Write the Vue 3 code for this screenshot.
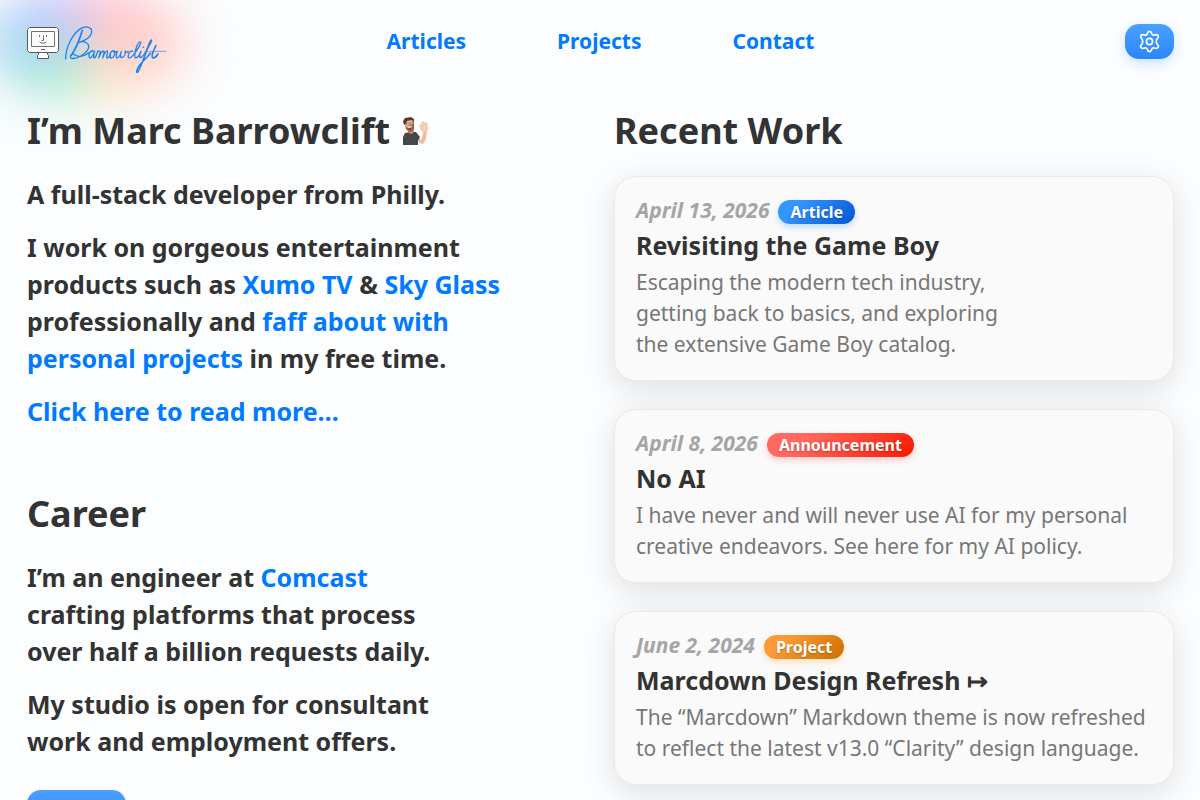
<script setup>
const navigation = ['Articles', 'Projects', 'Contact']

const work = [
  {
    date: 'April 13, 2026',
    kind: 'Article',
    title: 'Revisiting the Game Boy',
    lines: ['Escaping the modern tech industry,', 'getting back to basics, and exploring', 'the extensive Game Boy catalog.'],
  },
  {
    date: 'April 8, 2026',
    kind: 'Announcement',
    title: 'No AI',
    lines: ['I have never and will never use AI for my personal', 'creative endeavors. See here for my AI policy.'],
  },
  {
    date: 'June 2, 2024',
    kind: 'Project',
    title: 'Marcdown Design Refresh ↦',
    lines: ['The “Marcdown” Markdown theme is now refreshed', 'to reflect the latest v13.0 “Clarity” design language.'],
  },
]
</script>

<template>
  <div class="page">
    <div class="aura" aria-hidden="true"></div>

    <header class="header">
      <a class="brand" href="#" aria-label="Barrowclift home">
        <svg class="computer" viewBox="0 0 32 32" width="32" height="32" aria-hidden="true">
          <path d="M2.500.5h27l2 2v21l-2 2h-27l-2-2v-21z" fill="#fff" stroke="#56595e" />
          <path d="M4.500 4.500h23v15h-23z" fill="#fcfcfa" stroke="#77706a" />
          <path d="M12.500 8v2M19.500 8v2M16.500 8.500v5h-2M12.500 14.500l1.500 1.500h4l1.500-1.500" fill="none" stroke="#6b6e72" />
          <path d="M14 22.500h4" stroke="#55585c" />
          <path d="M11.500 26v1.500l-1 1v3h11v-3l-1-1v-1.500" fill="#fff" stroke="#56595e" />
        </svg>
        <svg viewBox="0 0 330 180" width="110" height="60" aria-hidden="true">
          <g fill="none" stroke="#1682f3" stroke-width="3.800" stroke-linecap="round" stroke-linejoin="round">
            <path d="M17 117C16 85 38 40 62 26C78 16 98 22 95 38C92 52 74 62 56 68C74 60 92 72 84 88C76 104 48 118 34 115C26 110 36 98 45 105C58 113 74 107 86 98" />
            <path d="M67 31C60 55 48 86 34 106" stroke-width="5" />
            <path d="M102 93C92 89 83 104 88 113C93 118 101 102 104 94C101 103 99 115 104 114C109 110 111 99 114 92C118 96 122 92 121 97C119 104 117 109 116 114C120 104 126 92 131 93C134 96 130 106 128 114C132 103 137 92 142 93C145 95 139 108 140 113C143 117 148 110 151 104" />
            <path d="M161 92C150 92 146 112 153 114C163 114 169 94 161 92C159 98 167 98 172 94C168 104 167 114 172 114C179 112 183 98 184 94C180 106 181 114 186 113C194 110 197 100 196 93C197 98 201 97 205 95" />
            <path d="M218 94C210 88 200 110 207 114C216 116 226 98 236 82C242 72 244 64 239 66C230 70 219 112 227 114C234 113 240 102 243 94C239 104 237 114 242 113C250 110 262 88 270 72" />
            <path d="M270 72C276 60 276 58 272 62C262 80 248 130 236 152C230 163 228 155 233 145C240 130 256 118 272 100" stroke-width="4.500" />
            <path d="M288 76C280 92 272 112 279 114C285 114 291 107 294 102" stroke-width="4.500" />
            <path d="M262 96C280 93 300 94 318 94" stroke-width="2" />
          </g>
          <circle cx="250" cy="82" r="2.500" fill="#1682f3" />
        </svg>
      </a>

      <nav class="navigation" aria-label="Main">
        <a v-for="item in navigation" :key="item" href="#">{{ item }}</a>
      </nav>

      <button class="settings" type="button" aria-label="Settings">
        <svg viewBox="0 0 24 24" width="23" height="23" fill="none" stroke="#fff" stroke-width="1.700" stroke-linejoin="round" aria-hidden="true">
          <path d="M12 1.500c1.500 0 2 1 2.300 2.200.3 1.300 1.600 2 2.900 1.500 1.500-.5 3-.7 3.800.6.8 1.300.2 2.300-.8 3.200-1.500 1.400-1.500 4.600 0 6 1 .9 1.600 1.900.8 3.200-.8 1.300-2.300 1.100-3.800.6-1.300-.5-2.600.2-2.900 1.500-.3 1.200-.8 2.200-2.300 2.200s-2-1-2.300-2.200c-.3-1.300-1.600-2-2.900-1.500-1.500.5-3 .7-3.800-.6-.8-1.300-.2-2.300.8-3.200 1.500-1.400 1.500-4.600 0-6-1-.9-1.600-1.900-.8-3.200.8-1.300 2.300-1.100 3.800-.6 1.300.5 2.600-.2 2.900-1.500C10 2.500 10.500 1.500 12 1.500z" />
          <circle cx="12" cy="12" r="3.200" />
        </svg>
      </button>
    </header>

    <main class="columns">
      <div class="about">
        <section>
          <h1>
            I’m Marc Barrowclift
            <svg viewBox="0 0 28 30" width="28" height="30" aria-hidden="true">
              <path d="M17 22l3 2 3-9 3 0-1 8-3 5-4-1z" fill="#efbd98" />
              <path d="M21 15l-2-4 0-3 2 2 0-4 2 0 1 3 1-3 1 1 0 3 1 1-1 4-2 2z" fill="#f6cfb2" stroke="#dfa987" stroke-width=".4" />
              <path d="M2 29l0-8 2-4 5-1 6 0 4 5-2 4 0 4z" fill="#45484b" />
              <path d="M7 12l1 5 3 1 2-3-1-4z" fill="#d9936f" />
              <path d="M3 6l2-3 6-1 2 4 0 6-3 4-3-1z" fill="#f0bd9b" />
              <path d="M4 9l3 3 2-3 3-1 1-1 0 6-2 3-3 0-3-3z" fill="#95664d" />
              <path d="M3 9L2 5l2-3 6-1 3 2 0 4-2-3-5 1-1 3z" fill="#5a3c2d" />
              <path d="M7 12l4-2-1 3-2 1z" fill="#b72e2d" />
              <path d="M7 11l4-1v1l-3 1z" fill="#fff" />
              <path d="M5 7h3v2H5zM9 6h3v2H9z" fill="none" stroke="#7a6055" stroke-width=".5" />
            </svg>
          </h1>
          <p>A full-stack developer from Philly.</p>
          <p>
            I work on gorgeous entertainment<br />
            products such as <a href="#">Xumo TV</a> &amp; <a href="#">Sky Glass</a><br />
            professionally and <a href="#">faff about with<br />
            personal projects</a> in my free time.
          </p>
          <p><a href="#">Click here to read more…</a></p>
        </section>

        <section>
          <h2>Career</h2>
          <p>
            I’m an engineer at <a href="#">Comcast</a><br />
            crafting platforms that process<br />
            over half a billion requests daily.
          </p>
          <p>
            My studio is open for consultant<br />
            work and employment offers.
          </p>
          <button class="action" type="button" aria-label="Career details"></button>
        </section>
      </div>

      <section>
        <h2>Recent Work</h2>
        <div class="cards">
          <article v-for="item in work" :key="item.title" class="card">
            <div class="meta">
              <time>{{ item.date }}</time>
              <span class="tag" :class="item.kind.toLowerCase()">{{ item.kind }}</span>
            </div>
            <h3>{{ item.title }}</h3>
            <p class="summary">
              <template v-for="(line, index) in item.lines" :key="line"><br v-if="index" />{{ line }}</template>
            </p>
          </article>
        </div>
      </section>
    </main>
  </div>
</template>

<style>
body {
  margin: 0;
  background: #fbfdff;
}
</style>

<style scoped>
.page {
  position: relative;
  overflow: hidden;
  padding: 0 26px 32px 27px;
  color: #333;
  font-family: "Noto Sans", sans-serif;
}

a {
  color: #007aff;
  text-decoration: none;
}

.aura {
  position: absolute;
  top: -14px;
  left: -14px;
  width: 200px;
  height: 116px;
  border-radius: 50%;
  background: conic-gradient(#ffbdd2, #ffc8ca 60deg, #ffd5c8 110deg, #fde6c6 160deg, #dcf1cb 182deg, #a8edca 205deg, #a6e2e2 250deg, #a9cdfb 285deg, #ccc0ff 330deg, #eac5fa 352deg, #ffbdd2);
  filter: blur(24px);
  pointer-events: none;
}

.header {
  position: relative;
  display: grid;
  grid-template-columns: 1fr auto 1fr;
  align-items: center;
  height: 83px;
}

.brand {
  display: flex;
  align-self: start;
  align-items: flex-start;
  gap: 1px;
  padding-top: 20px;
}

.computer {
  margin-top: 7px;
}

.navigation {
  display: flex;
  gap: 91px;
  padding-bottom: 2px;
  font-size: 21px;
  line-height: 28px;
  font-weight: 700;
}

.settings {
  justify-self: end;
  display: grid;
  place-items: center;
  width: 49px;
  height: 35px;
  padding: 0;
  border: 0;
  border-radius: 14px;
  background: linear-gradient(#4ba0ff, #2c86fa);
  box-shadow: 0 4px 12px rgb(0 122 255 / 20%);
}

.columns {
  position: relative;
  display: grid;
  grid-template-columns: 1fr 1fr;
  gap: 27px;
  padding-top: 24px;
}

h1,
h2 {
  margin: 0;
  font-size: 36px;
  line-height: 48px;
  font-weight: 700;
}

h1 {
  display: flex;
  align-items: center;
  gap: 11px;
}

.about p {
  margin: 16px 0 0;
  font-size: 25px;
  line-height: 37px;
  font-weight: 700;
}

.about h1 + p,
.about h2 + p {
  margin-top: 21px;
}

.about section + section {
  margin-top: 60px;
}

.action {
  display: block;
  width: 99px;
  height: 36px;
  margin-top: 30px;
  border: 0;
  border-radius: 14px;
  background: linear-gradient(#4ba0ff, #2c86fa);
}

.cards {
  display: grid;
  gap: 28px;
  margin-top: 21px;
}

.card {
  padding: 18px 21px 20px;
  border: 1px solid #e9eaeb;
  border-radius: 22px;
  background: #fafafa;
  box-shadow: 0 8px 32px rgb(0 8 0 / 12%);
}

.meta {
  display: flex;
  align-items: center;
  gap: 9px;
  height: 31px;
}

time {
  color: #a5a5a5;
  font-size: 21px;
  line-height: 31px;
  font-style: italic;
  font-weight: 700;
}

.tag {
  margin-top: 3px;
  padding: 0 12px;
  border-radius: 12px;
  color: #fff;
  font-size: 16px;
  line-height: 24px;
  font-weight: 700;
  text-shadow: 0 1px 2px rgb(0 0 0 / 25%);
}

.tag.article {
  background: linear-gradient(135deg, #3395ff 25%, #0057cf);
  box-shadow: 0 3px 6px rgb(0 122 255 / 25%);
}

.tag.announcement {
  background: linear-gradient(135deg, #ff6961 25%, #f81800);
  box-shadow: 0 3px 6px rgb(255 59 48 / 25%);
}

.tag.project {
  background: linear-gradient(135deg, #fb9a37 25%, #cc7000);
  box-shadow: 0 3px 6px rgb(255 149 0 / 25%);
}

h3 {
  margin: 0;
  font-size: 25px;
  line-height: 38px;
  font-weight: 700;
}

.summary {
  margin: 3px 0 0;
  color: #777;
  font-size: 21px;
  line-height: 31px;
}
</style>
